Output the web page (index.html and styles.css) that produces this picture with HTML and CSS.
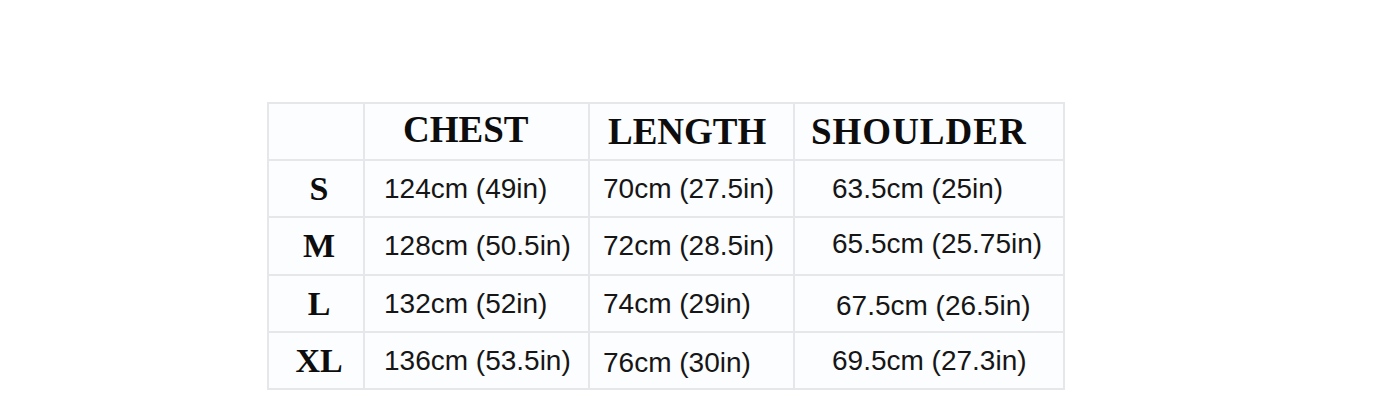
FILE: index.html
```html
<!DOCTYPE html>
<html lang="en">
<head>
<meta charset="utf-8">
<title>Size chart</title>
<link rel="stylesheet" href="styles.css">
</head>
<body>
<div class="chart">
  <div class="cell corner"></div>
  <div class="cell head col-chest up">CHEST</div>
  <div class="cell head col-length">LENGTH</div>
  <div class="cell head col-shoulder wide">SHOULDER</div>

  <div class="cell size">S</div>
  <div class="cell data col-chest">124cm (49in)</div>
  <div class="cell data col-length">70cm (27.5in)</div>
  <div class="cell data col-shoulder">63.5cm (25in)</div>

  <div class="cell size">M</div>
  <div class="cell data col-chest">128cm (50.5in)</div>
  <div class="cell data col-length">72cm (28.5in)</div>
  <div class="cell data col-shoulder up">65.5cm (25.75in)</div>

  <div class="cell size">L</div>
  <div class="cell data col-chest">132cm (52in)</div>
  <div class="cell data col-length">74cm (29in)</div>
  <div class="cell data col-shoulder shift down">67.5cm (26.5in)</div>

  <div class="cell size">XL</div>
  <div class="cell data col-chest">136cm (53.5in)</div>
  <div class="cell data col-length down">76cm (30in)</div>
  <div class="cell data col-shoulder">69.5cm (27.3in)</div>
</div>
</body>
</html>
```
FILE: styles.css
```css
html, body {
  margin: 0;
  padding: 0;
  background: #ffffff;
}

body {
  padding: 102px 0 0 267px;
}

.chart {
  display: grid;
  grid-template-columns: 94px 223px 203px 268px;
  grid-template-rows: 55px 55px 56px 55px 55px;
  gap: 2px;
  padding: 2px;
  width: max-content;
  background: #e6e7eb;
}

.cell {
  background: #fcfdff;
  display: flex;
  align-items: center;
  line-height: 1;
  color: #111111;
  white-space: nowrap;
}

.head {
  font-family: "Liberation Serif", "Times New Roman", serif;
  font-weight: 700;
  font-size: 37px;
  color: #0d0d0d;
}

.size {
  font-family: "Liberation Serif", "Times New Roman", serif;
  font-weight: 700;
  font-size: 34px;
  justify-content: center;
  padding-left: 6px;
  color: #0d0d0d;
}

.data {
  font-family: "Liberation Sans", Arial, sans-serif;
  font-size: 28px;
  color: #161616;
}

.head.col-chest { padding-left: 38px; }
.head.col-length { padding-left: 18px; }
.head.col-shoulder { padding-left: 16px; }
.wide { letter-spacing: 1px; }

.data.col-chest { padding-left: 19px; }
.data.col-length { padding-left: 13px; }
.data.col-shoulder { padding-left: 37px; }
.data.col-shoulder.shift { padding-left: 41px; }

.up { padding-bottom: 5px; }
.down { padding-top: 5px; }
```
